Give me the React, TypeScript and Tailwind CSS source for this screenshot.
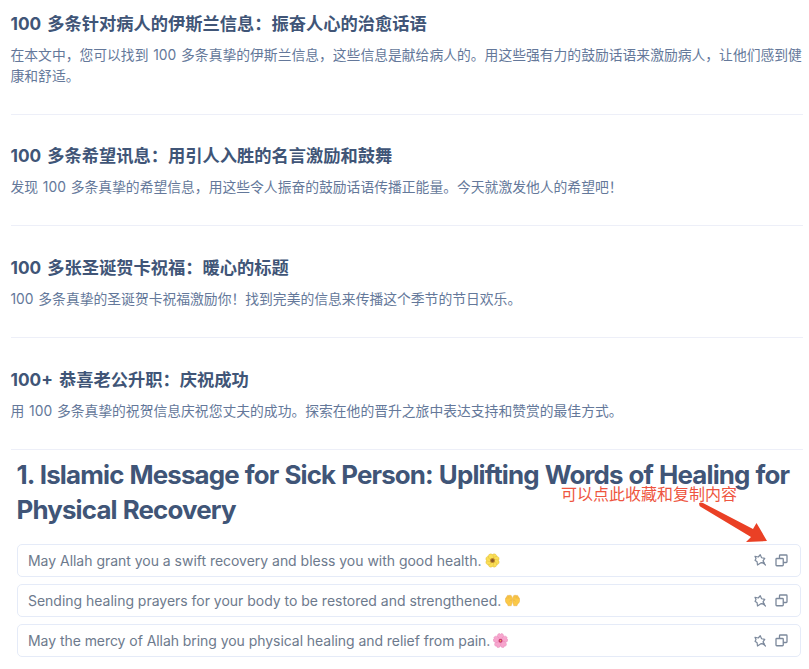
import type { ReactNode } from "react";

const articles = [
  {
    title: "100 多条针对病人的伊斯兰信息：振奋人心的治愈话语",
    lines: [
      "在本文中，您可以找到 100 多条真挚的伊斯兰信息，这些信息是献给病人的。用这些强有力的鼓励话语来激励病人，让他们感到健",
      "康和舒适。",
    ],
  },
  {
    title: "100 多条希望讯息：用引人入胜的名言激励和鼓舞",
    lines: ["发现 100 多条真挚的希望信息，用这些令人振奋的鼓励话语传播正能量。今天就激发他人的希望吧！"],
  },
  {
    title: "100 多张圣诞贺卡祝福：暖心的标题",
    lines: ["100 多条真挚的圣诞贺卡祝福激励你！找到完美的信息来传播这个季节的节日欢乐。"],
  },
  {
    title: "100+ 恭喜老公升职：庆祝成功",
    lines: ["用 100 多条真挚的祝贺信息庆祝您丈夫的成功。探索在他的晋升之旅中表达支持和赞赏的最佳方式。"],
  },
];

function Sunflower() {
  return (
    <svg width="15" height="15" viewBox="0 0 30 30">
      {[22, 67, 112, 157, 202, 247, 292, 337].map((a) => (
        <ellipse key={a} cx="15" cy="7" rx="5" ry="6" fill="#fbdf55" stroke="#dcb642" strokeWidth="0.8" transform={`rotate(${a} 15 15)`} />
      ))}
      <circle cx="15" cy="15" r="5" fill="#c08a2c" />
      <circle cx="15" cy="15" r="3" fill="#86562a" />
    </svg>
  );
}

function Palms() {
  return (
    <svg width="15" height="15" viewBox="0 0 30 30">
      <g fill="#fbc948" stroke="#e0a53c" strokeWidth="0.8" strokeLinejoin="round">
        <path d="M14.800 12c0-2-.6-4-2-6.500-.8-1.400-2.600-1.200-2.800.2-.6-2-3-2.200-3.400 0-1-1.500-3-.8-3 1.300l-.2 1.500C1.500 8.500.5 11 .5 14c0 4 2 6.500 4.500 8.500l1 3h6.500l.8-3c1.200-2 1.500-6 1.500-10.500z" />
        <path d="M15.200 12c0-2 .6-4 2-6.500.8-1.400 2.600-1.200 2.800.2.6-2 3-2.200 3.400 0 1-1.500 3-.8 3 1.300l.2 1.500c1.900 0 2.900 2.500 2.900 5.500 0 4-2 6.500-4.500 8.500l-1 3h-6.500l-.8-3c-1.200-2-1.500-6-1.500-10.500z" />
        <path d="M10 6v5M6.600 6v5M3.500 8.500V12M20 6v5M23.400 6v5M26.500 8.500V12" fill="none" />
        <path d="M14 15c-2-2-4-1-5 2M16 15c2-2 4-1 5 2" fill="none" />
      </g>
    </svg>
  );
}

function Blossom() {
  return (
    <svg width="15" height="15" viewBox="0 0 30 30">
      {[0, 72, 144, 216, 288].map((a) => (
        <path key={a} d="M15 15C7 10 7 1 13.500 1L15 3l1.500-2C23 1 23 10 15 15z" fill="#f7a5cd" stroke="#e588b8" strokeWidth="0.9" transform={`rotate(${a} 15 15.500)`} />
      ))}
      <circle cx="15" cy="15.500" r="4" fill="#c83b6e" />
      <circle cx="15" cy="15.500" r="1.500" fill="#f3c05a" />
    </svg>
  );
}

const messages: { text: string; emoji: ReactNode; width: string }[] = [
  { text: "May Allah grant you a swift recovery and bless you with good health.", emoji: <Sunflower />, width: "w-[453px] tracking-[-0.025px]" },
  { text: "Sending healing prayers for your body to be restored and strengthened.", emoji: <Palms />, width: "w-[473px] tracking-[-0.020px]" },
  { text: "May the mercy of Allah bring you physical healing and relief from pain.", emoji: <Blossom />, width: "w-[461px] tracking-[-0.055px]" },
];

function PinIcon() {
  return (
    <svg width="12" height="12" viewBox="0 0 24 24" fill="none" stroke="#7c899c" strokeWidth="2.400" strokeLinejoin="round">
      <path d="M2 4.500l6.500 1.500L12.500 1.500l2.700 6 6.300 1.200-3.500 5 3 5-6.500-1.500L7 22l-.8-6.300L2 12.500l2-3z" />
      <path d="M18 17.500l5 4.500" strokeLinecap="round" />
    </svg>
  );
}

function CopyIcon() {
  return (
    <svg width="13" height="13" viewBox="0 0 26 26" fill="none" stroke="#7c899c" strokeWidth="2.600" strokeLinejoin="round">
      <rect x="2" y="9" width="14.500" height="14.500" rx="1.500" />
      <path d="M9 9V3.500Q9 2 10.500 2H22.500Q24 2 24 3.500V15.500Q24 17 22.500 17H16.500" />
    </svg>
  );
}

export default function App() {
  return (
    <main className="relative h-[669px] w-[809px] overflow-hidden bg-white font-[Inter,'Noto_Sans_CJK_SC',sans-serif] text-[#405577] [text-spacing-trim:space-all]">
      <section className="pl-[10.500px] pr-[6px]">
        {articles.map((article, i) => (
          <article
            key={article.title}
            className={`border-b border-[#edeff8] ${i === 0 ? "h-[114.500px] pt-[10px]" : "h-[111.700px] pt-[27.700px]"}`}
          >
            <h2 className="whitespace-nowrap text-[17.250px] leading-[28px] font-bold [word-spacing:2px]">{article.title}</h2>
            <div className="mt-[7px] text-[13.800px] leading-[20.700px] text-[#64789a] [word-spacing:0.900px]">
              {article.lines.map((line) => (
                <p key={line} className="whitespace-nowrap">{line}</p>
              ))}
            </div>
          </article>
        ))}
      </section>
      <section className="pt-[7.500px] pr-[8px] pl-[16.500px]">
        <h1 className="text-[25.875px] leading-[35px] font-bold tracking-[-0.840px] [word-spacing:0.700px] whitespace-nowrap">
          1. Islamic Message for Sick Person: Uplifting Words of Healing for
          <br />
          Physical Recovery
        </h1>
        <ul className="mt-[16.800px] flex flex-col gap-[7px]">
          {messages.map((m) => (
            <li key={m.text} className="flex h-[33.200px] items-center rounded-[5px] border border-[#e5ebf8] pr-[12px] pl-[10.500px] text-[#6d7a8d]">
              <span className={`shrink-0 text-[14px] whitespace-nowrap ${m.width}`}>{m.text}</span>
              <span className="ml-[4px]">{m.emoji}</span>
              <span className="ml-auto flex items-center gap-[9px]">
                <PinIcon />
                <CopyIcon />
              </span>
            </li>
          ))}
        </ul>
      </section>
      <div className="absolute top-[482px] left-[561px] text-[16px] leading-[24px] whitespace-nowrap text-[#ee5540]">
        可以点此收藏和复制内容
      </div>
      <svg className="absolute top-[500px] left-[696px]" width="74" height="44" viewBox="0 0 74 44">
        <path d="M3 3.500Q4 2 7 3L57 29L60.500 23L71 41L50 42L55 37L5 7Q3 6 3 3.500z" fill="#ea4025" />
      </svg>
    </main>
  );
}
